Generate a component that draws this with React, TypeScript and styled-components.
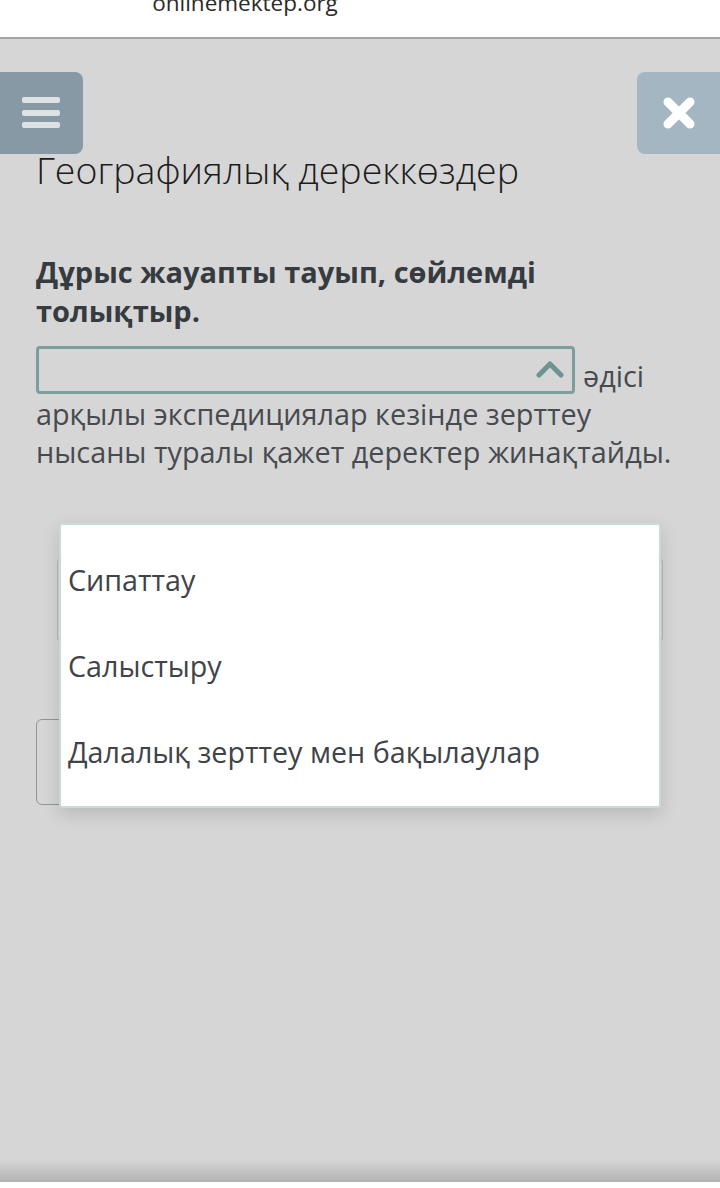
import React from 'react';
import styled, { createGlobalStyle } from 'styled-components';

const GlobalStyle = createGlobalStyle`
  html, body {
    margin: 0;
    padding: 0;
    background: #d6d6d6;
  }
  body {
    font-family: "Open Sans", "Noto Sans", sans-serif;
  }
`;

const Page = styled.div`
  display: flex;
  flex-direction: column;
  width: 720px;
  min-height: 1188px;
  background: #d6d6d6;
`;

const AddressBar = styled.div`
  height: 37px;
  background: #fff;
  border-bottom: 2px solid #a4a4a4;
  overflow: hidden;
  display: flex;
  justify-content: center;
`;

const SiteName = styled.div`
  margin-top: -10px;
  margin-left: -230px;
  font-size: 22.5px;
  line-height: 26px;
  color: #2a2a2a;
`;

const Main = styled.main`
  flex: 1;
  position: relative;
`;

const TopRow = styled.div`
  display: flex;
  justify-content: space-between;
  margin-top: 33px;
`;

const SideButton = styled.button<{ $tone: string; $side: 'left' | 'right' }>`
  width: 83px;
  height: 82px;
  border: none;
  padding: 0;
  background: ${(p) => p.$tone};
  border-radius: ${(p) => (p.$side === 'left' ? '0 8px 8px 0' : '8px 0 0 8px')};
  display: flex;
  align-items: center;
  justify-content: center;
  ${(p) => (p.$side === 'left' ? 'padding-right: 2px;' : 'padding-left: 0;')}
`;

const Content = styled.div`
  padding: 0 36px;
`;

const Title = styled.h1`
  margin: -6px 0 0;
  font-size: 37.5px;
  line-height: 44px;
  font-weight: 300;
  color: #1c1c1c;
`;

const Question = styled.p`
  margin: 60px 0 0;
  font-size: 29px;
  line-height: 39px;
  font-weight: 700;
  color: #363b40;
`;

const Sentence = styled.div`
  margin-top: 16px;
  font-size: 28.8px;
  line-height: 38px;
  color: #474b4f;
`;

const SelectBox = styled.span`
  display: inline-block;
  box-sizing: border-box;
  width: 539px;
  height: 48px;
  margin-right: 8px;
  padding-right: 8px;
  border: 3px solid #7c9f9e;
  border-radius: 4px;
  vertical-align: -7px;
`;

const Chevron = styled.span`
  float: right;
  margin-top: 11px;
  line-height: 0;
`;

const Behind = styled.div`
  margin-top: 86px;
  display: flex;
  flex-direction: column;
  gap: 76px;
`;

const HiddenCard = styled.div`
  margin: 0 21px 0 21px;
  height: 84px;
  border: 1px solid #b4baba;
  border-radius: 6px;
`;

const HiddenButton = styled.div`
  width: 300px;
  height: 84px;
  border: 1px solid #8f9698;
  border-radius: 6px;
`;

const Dropdown = styled.ul`
  position: absolute;
  top: 484px;
  left: 59px;
  width: 602px;
  box-sizing: border-box;
  margin: 0;
  padding: 11px 0 12px;
  list-style: none;
  background: #fff;
  border: 2px solid #c7dbd7;
  border-radius: 3px;
  box-shadow: 0 6px 18px rgba(0, 0, 0, 0.14);
`;

const Option = styled.li`
  height: 86px;
  display: flex;
  align-items: center;
  padding-left: 7px;
  font-size: 28.7px;
  color: #3f4449;
`;

const BottomShade = styled.div`
  height: 22px;
  background: linear-gradient(#d6d6d6, #b2b2b2);
  border-bottom: 6px solid #fff;
`;

const MenuIcon = () => (
  <svg width="38" height="32" viewBox="0 0 38 32">
    <rect x="0" y="0" width="38" height="6" rx="2" fill="#dde2e5" />
    <rect x="0" y="13" width="38" height="6" rx="2" fill="#dde2e5" />
    <rect x="0" y="25" width="38" height="6" rx="2" fill="#dde2e5" />
  </svg>
);

const CloseIcon = () => (
  <svg width="32" height="32" viewBox="0 0 32 32">
    <path d="M5 5 L27 27 M27 5 L5 27" stroke="#fff" strokeWidth="9" strokeLinecap="round" />
  </svg>
);

const ChevronUp = () => (
  <svg width="28" height="18" viewBox="0 0 28 18">
    <path d="M3 15 L14 4 L25 15" stroke="#6d9393" strokeWidth="5" fill="none" strokeLinecap="round" strokeLinejoin="round" />
  </svg>
);

const options = ['Сипаттау', 'Салыстыру', 'Далалық зерттеу мен бақылаулар'];

export default function App() {
  return (
    <Page>
      <GlobalStyle />
      <AddressBar>
        <SiteName>onlinemektep.org</SiteName>
      </AddressBar>
      <Main>
        <TopRow>
          <SideButton $tone="#8899a6" $side="left" aria-label="menu">
            <MenuIcon />
          </SideButton>
          <SideButton $tone="#a3b6c2" $side="right" aria-label="close">
            <CloseIcon />
          </SideButton>
        </TopRow>
        <Content>
          <Title>Географиялық дереккөздер</Title>
          <Question>Дұрыс жауапты тауып, сөйлемді толықтыр.</Question>
          <Sentence>
            <SelectBox>
              <Chevron>
                <ChevronUp />
              </Chevron>
            </SelectBox>
            әдісі арқылы экспедициялар кезінде зерттеу нысаны туралы қажет деректер жинақтайды.
          </Sentence>
          <Behind>
            <HiddenCard />
            <HiddenButton />
          </Behind>
        </Content>
        <Dropdown>
          {options.map((o) => (
            <Option key={o}>{o}</Option>
          ))}
        </Dropdown>
      </Main>
      <BottomShade />
    </Page>
  );
}
